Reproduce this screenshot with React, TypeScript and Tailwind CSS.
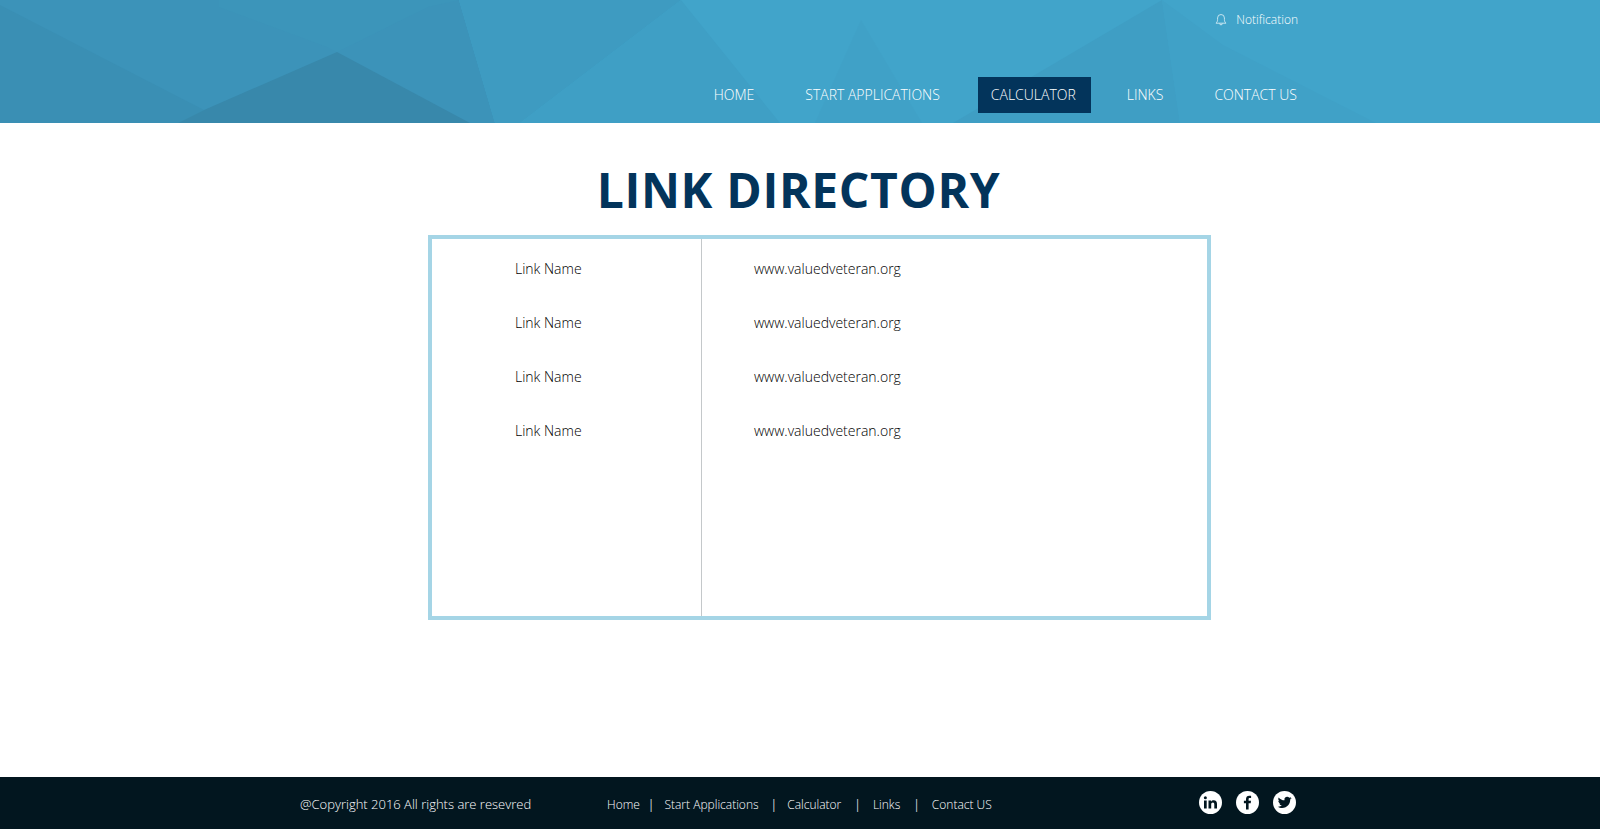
const navItems = [
  { label: 'HOME', className: 'ml-0 px-0' },
  { label: 'START APPLICATIONS', className: 'ml-[51px] px-0' },
  { label: 'CALCULATOR', className: 'ml-[38px] pl-[13px] pr-[15px] bg-[#03345b]' },
  { label: 'LINKS', className: 'ml-[36px] px-0' },
  { label: 'CONTACT US', className: 'ml-[51px] px-0' },
]

const footerLinks = [
  { label: 'Home', pipe: '' },
  { label: 'Start Applications', pipe: 'ml-[8px] mr-[10px]' },
  { label: 'Calculator', pipe: 'ml-[12px] mr-[10px]' },
  { label: 'Links', pipe: 'ml-[13px] mr-[12px]' },
  { label: 'Contact US', pipe: 'ml-[13px] mr-[12px]' },
]

const rows = [1, 2, 3, 4]

function HeaderArt() {
  return (
    <svg className="absolute inset-0 w-full h-full" viewBox="0 0 1600 123" preserveAspectRatio="none">
      <rect width="1600" height="123" fill="#41a4ca" />
      <polygon points="0,0 459,0 495,123 0,123" fill="#3c93b9" />
      <polygon points="219,7 327,47 337,52 428,7 459,0 219,0" fill="#3c95ba" />
      <polygon points="0,5 204,110 178,123 0,123" fill="#3a8fb4" />
      <polygon points="337,52 470,123 178,123 204,110" fill="#3888ab" />
      <polygon points="459,0 681,0 520,123 495,123" fill="#3e9bc1" />
      <polygon points="681,0 780,123 520,123" fill="#3f9fc5" />
      <polygon points="861,20 815,123 922,123" fill="#40a1c7" />
      <polygon points="1162,0 953,123 1180,123" fill="#3f9ec4" />
      <polygon points="1162,0 1223,45 1376,123 1180,123" fill="#40a1c7" />
    </svg>
  )
}

function BellIcon() {
  return (
    <svg width="12" height="13" viewBox="0 0 13 13" fill="none" stroke="#cfe9f3" strokeWidth="1">
      <path d="M1 10.500c1.200-1 1.800-2 1.800-4V4.800a3.700 3.700 0 0 1 7.400 0v1.700c0 2 .6 3 1.800 4z" />
      <path d="M5 10.800a1.500 1.500 0 0 0 3 0" />
    </svg>
  )
}

function LinkedinIcon() {
  return (
    <svg width="23" height="23" viewBox="0 0 23 23">
      <circle cx="11.500" cy="11.500" r="11.500" fill="#fff" />
      <rect x="5" y="9.500" width="2.700" height="8" fill="#02161f" />
      <circle cx="6.350" cy="6.800" r="1.500" fill="#02161f" />
      <path d="M9.500 9.500h2.600v1.200c.5-.9 1.500-1.400 2.600-1.400 2.300 0 3.300 1.400 3.300 3.800v4.400h-2.700v-4c0-1.200-.4-1.900-1.400-1.900s-1.700.7-1.700 1.900v4H9.500z" fill="#02161f" />
    </svg>
  )
}

function FacebookIcon() {
  return (
    <svg width="23" height="23" viewBox="0 0 23 23">
      <circle cx="11.500" cy="11.500" r="11.500" fill="#fff" />
      <path d="M12.600 18.500v-6.200h2.100l.3-2.500h-2.400V8.300c0-.7.2-1.200 1.200-1.200h1.300V4.900c-.2 0-1-.1-1.900-.1-1.900 0-3.200 1.200-3.200 3.300v1.700H7.900v2.500H10v6.200z" fill="#02161f" />
    </svg>
  )
}

function TwitterIcon() {
  return (
    <svg width="23" height="23" viewBox="0 0 23 23">
      <circle cx="11.500" cy="11.500" r="11.500" fill="#fff" />
      <path d="M18.500 7.100c-.5.200-1 .4-1.600.5.600-.4 1-.9 1.200-1.600-.5.300-1.100.6-1.800.7a2.800 2.800 0 0 0-4.800 2.600c-2.300-.1-4.400-1.200-5.800-2.900-.8 1.300-.4 3 .9 3.800-.5 0-.9-.1-1.300-.4 0 1.400 1 2.500 2.300 2.800-.4.100-.8.100-1.300 0 .4 1.100 1.400 1.900 2.600 2-1.200.9-2.600 1.300-4.200 1.100 1.300.8 2.800 1.300 4.400 1.300 5.300 0 8.300-4.500 8.100-8.500.6-.4 1.100-.9 1.500-1.400z" fill="#02161f" />
    </svg>
  )
}

export default function App() {
  return (
    <div className="min-h-[829px] flex flex-col bg-white font-['Open_Sans',sans-serif]">
      <header className="relative h-[123px] overflow-hidden">
        <HeaderArt />
        <div className="relative h-full flex flex-col items-end pr-[303px]">
          <div className="flex items-center gap-[9px] h-[39px] mr-[-1px] text-[12px] text-white font-light">
            <BellIcon />
            <span>Notification</span>
          </div>
          <nav className="flex items-center mt-[38px]">
            {navItems.map(item => (
              <a key={item.label} className={`h-[36px] pb-[2px] flex items-center text-[14px] text-white font-light ${item.className}`}>
                {item.label}
              </a>
            ))}
          </nav>
        </div>
      </header>

      <main className="flex-1 flex flex-col items-center">
        <h1 className="mt-[34px] ml-[-3px] text-[48px] leading-[66px] font-bold tracking-[0.65px] text-[#03345b]">LINK DIRECTORY</h1>
        <div className="mt-[12px] ml-[39px] w-[783px] h-[385px] border-[4px] border-[#a5d5e6] flex">
          <div className="w-[270px] border-r border-[#c4c8ca] pl-[83px] pt-[2px]">
            {rows.map(r => (
              <div key={r} className="h-[54px] flex items-center text-[14px] font-light text-black">Link Name</div>
            ))}
          </div>
          <div className="flex-1 pl-[52px] pt-[2px]">
            {rows.map(r => (
              <div key={r} className="h-[54px] flex items-center text-[14px] font-light text-black">www.valuedveteran.org</div>
            ))}
          </div>
        </div>
      </main>

      <footer className="h-[52px] bg-[#02161f] flex items-center text-white pl-[300px] pt-[4px]">
        <span className="w-[307px] text-[13px] font-light">@Copyright 2016 All rights are resevred</span>
        <div className="flex items-center text-[12px] font-light">
          {footerLinks.map(link => (
            <span key={link.label} className="flex items-center">
              {link.pipe && <span className={`text-[#d5dadc] font-normal ${link.pipe}`}>|</span>}
              {link.label}
            </span>
          ))}
        </div>
        <div className="flex items-center gap-[14px] ml-[207px] mb-[5px]">
          <LinkedinIcon />
          <FacebookIcon />
          <TwitterIcon />
        </div>
      </footer>
    </div>
  )
}
